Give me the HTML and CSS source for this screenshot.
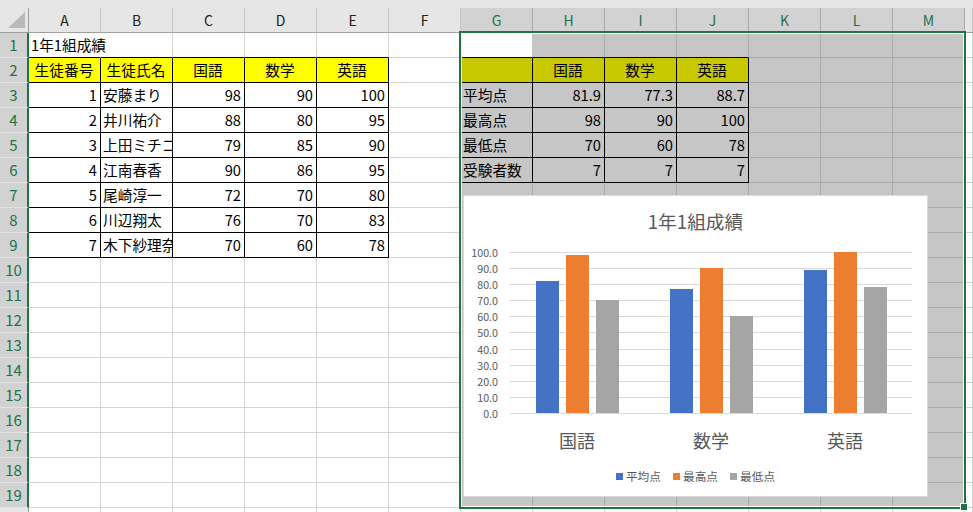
FILE: index.html
```html
<!DOCTYPE html>
<html lang="ja">
<head>
<meta charset="utf-8">
<title>1年1組成績</title>
<link rel="stylesheet" href="styles.css">
</head>
<body>
<div class="app">
  <div class="strip"></div>
  <div class="sheet">
    <div class="corner"><span class="tri"></span></div>
    <div class="ch">A</div><div class="ch">B</div><div class="ch">C</div><div class="ch">D</div><div class="ch">E</div><div class="ch">F</div>
    <div class="ch chs">G</div><div class="ch chs">H</div><div class="ch chs">I</div><div class="ch chs">J</div><div class="ch chs">K</div><div class="ch chs">L</div><div class="ch chs">M</div>
    <div class="ch"></div>

    <div class="rh">1</div>
    <div class="c ov bb">1年1組成績</div><div class="c bb"></div><div class="c bb"></div><div class="c bb"></div><div class="c bb"></div><div class="c"></div>
    <div class="c act bb"></div><div class="c s bb"></div><div class="c s bb"></div><div class="c s bb"></div><div class="c s"></div><div class="c s"></div><div class="c s"></div>
    <div class="c"></div>

    <div class="rh">2</div>
    <div class="c y bk">生徒番号</div><div class="c y bk">生徒氏名</div><div class="c y bk">国語</div><div class="c y bk">数学</div><div class="c y bk">英語</div><div class="c"></div>
    <div class="c s o bk"></div><div class="c s o bk">国語</div><div class="c s o bk">数学</div><div class="c s o bk">英語</div><div class="c s"></div><div class="c s"></div><div class="c s"></div>
    <div class="c"></div>

    <div class="rh">3</div>
    <div class="c r bk">1</div><div class="c bk">安藤まり</div><div class="c r bk">98</div><div class="c r bk">90</div><div class="c r bk">100</div><div class="c"></div>
    <div class="c s bk">平均点</div><div class="c s r bk">81.9</div><div class="c s r bk">77.3</div><div class="c s r bk">88.7</div><div class="c s"></div><div class="c s"></div><div class="c s"></div>
    <div class="c"></div>

    <div class="rh">4</div>
    <div class="c r bk">2</div><div class="c bk">井川祐介</div><div class="c r bk">88</div><div class="c r bk">80</div><div class="c r bk">95</div><div class="c"></div>
    <div class="c s bk">最高点</div><div class="c s r bk">98</div><div class="c s r bk">90</div><div class="c s r bk">100</div><div class="c s"></div><div class="c s"></div><div class="c s"></div>
    <div class="c"></div>

    <div class="rh">5</div>
    <div class="c r bk">3</div><div class="c bk">上田ミチコ</div><div class="c r bk">79</div><div class="c r bk">85</div><div class="c r bk">90</div><div class="c"></div>
    <div class="c s bk">最低点</div><div class="c s r bk">70</div><div class="c s r bk">60</div><div class="c s r bk">78</div><div class="c s"></div><div class="c s"></div><div class="c s"></div>
    <div class="c"></div>

    <div class="rh">6</div>
    <div class="c r bk">4</div><div class="c bk">江南春香</div><div class="c r bk">90</div><div class="c r bk">86</div><div class="c r bk">95</div><div class="c"></div>
    <div class="c s bk">受験者数</div><div class="c s r bk">7</div><div class="c s r bk">7</div><div class="c s r bk">7</div><div class="c s"></div><div class="c s"></div><div class="c s"></div>
    <div class="c"></div>

    <div class="rh">7</div>
    <div class="c r bk">5</div><div class="c bk">尾崎淳一</div><div class="c r bk">72</div><div class="c r bk">70</div><div class="c r bk">80</div><div class="c"></div>
    <div class="c s"></div><div class="c s"></div><div class="c s"></div><div class="c s"></div><div class="c s"></div><div class="c s"></div><div class="c s"></div>
    <div class="c"></div>

    <div class="rh">8</div>
    <div class="c r bk">6</div><div class="c bk">川辺翔太</div><div class="c r bk">76</div><div class="c r bk">70</div><div class="c r bk">83</div><div class="c"></div>
    <div class="c s"></div><div class="c s"></div><div class="c s"></div><div class="c s"></div><div class="c s"></div><div class="c s"></div><div class="c s"></div>
    <div class="c"></div>

    <div class="rh">9</div>
    <div class="c r bk">7</div><div class="c bk">木下紗理奈</div><div class="c r bk">70</div><div class="c r bk">60</div><div class="c r bk">78</div><div class="c"></div>
    <div class="c s"></div><div class="c s"></div><div class="c s"></div><div class="c s"></div><div class="c s"></div><div class="c s"></div><div class="c s"></div>
    <div class="c"></div>

    <div class="rh">10</div>
    <div class="c"></div><div class="c"></div><div class="c"></div><div class="c"></div><div class="c"></div><div class="c"></div>
    <div class="c s"></div><div class="c s"></div><div class="c s"></div><div class="c s"></div><div class="c s"></div><div class="c s"></div><div class="c s"></div>
    <div class="c"></div>

    <div class="rh">11</div>
    <div class="c"></div><div class="c"></div><div class="c"></div><div class="c"></div><div class="c"></div><div class="c"></div>
    <div class="c s"></div><div class="c s"></div><div class="c s"></div><div class="c s"></div><div class="c s"></div><div class="c s"></div><div class="c s"></div>
    <div class="c"></div>

    <div class="rh">12</div>
    <div class="c"></div><div class="c"></div><div class="c"></div><div class="c"></div><div class="c"></div><div class="c"></div>
    <div class="c s"></div><div class="c s"></div><div class="c s"></div><div class="c s"></div><div class="c s"></div><div class="c s"></div><div class="c s"></div>
    <div class="c"></div>

    <div class="rh">13</div>
    <div class="c"></div><div class="c"></div><div class="c"></div><div class="c"></div><div class="c"></div><div class="c"></div>
    <div class="c s"></div><div class="c s"></div><div class="c s"></div><div class="c s"></div><div class="c s"></div><div class="c s"></div><div class="c s"></div>
    <div class="c"></div>

    <div class="rh">14</div>
    <div class="c"></div><div class="c"></div><div class="c"></div><div class="c"></div><div class="c"></div><div class="c"></div>
    <div class="c s"></div><div class="c s"></div><div class="c s"></div><div class="c s"></div><div class="c s"></div><div class="c s"></div><div class="c s"></div>
    <div class="c"></div>

    <div class="rh">15</div>
    <div class="c"></div><div class="c"></div><div class="c"></div><div class="c"></div><div class="c"></div><div class="c"></div>
    <div class="c s"></div><div class="c s"></div><div class="c s"></div><div class="c s"></div><div class="c s"></div><div class="c s"></div><div class="c s"></div>
    <div class="c"></div>

    <div class="rh">16</div>
    <div class="c"></div><div class="c"></div><div class="c"></div><div class="c"></div><div class="c"></div><div class="c"></div>
    <div class="c s"></div><div class="c s"></div><div class="c s"></div><div class="c s"></div><div class="c s"></div><div class="c s"></div><div class="c s"></div>
    <div class="c"></div>

    <div class="rh">17</div>
    <div class="c"></div><div class="c"></div><div class="c"></div><div class="c"></div><div class="c"></div><div class="c"></div>
    <div class="c s"></div><div class="c s"></div><div class="c s"></div><div class="c s"></div><div class="c s"></div><div class="c s"></div><div class="c s"></div>
    <div class="c"></div>

    <div class="rh">18</div>
    <div class="c"></div><div class="c"></div><div class="c"></div><div class="c"></div><div class="c"></div><div class="c"></div>
    <div class="c s"></div><div class="c s"></div><div class="c s"></div><div class="c s"></div><div class="c s"></div><div class="c s"></div><div class="c s"></div>
    <div class="c"></div>

    <div class="rh">19</div>
    <div class="c"></div><div class="c"></div><div class="c"></div><div class="c"></div><div class="c"></div><div class="c"></div>
    <div class="c s"></div><div class="c s"></div><div class="c s"></div><div class="c s"></div><div class="c s"></div><div class="c s"></div><div class="c s"></div>
    <div class="c"></div>

    <div class="rh rh0"></div>
    <div class="c"></div><div class="c"></div><div class="c"></div><div class="c"></div><div class="c"></div><div class="c"></div>
    <div class="c"></div><div class="c"></div><div class="c"></div><div class="c"></div><div class="c"></div><div class="c"></div><div class="c"></div>
    <div class="c"></div>
  </div>

  <div class="sel"></div>
  <div class="handle"></div>

  <div class="chart">
    <div class="ctitle">1年1組成績</div>
    <div class="cplot">
      <div class="yaxis">
        <div class="yl">100.0</div><div class="yl">90.0</div><div class="yl">80.0</div><div class="yl">70.0</div><div class="yl">60.0</div><div class="yl">50.0</div><div class="yl">40.0</div><div class="yl">30.0</div><div class="yl">20.0</div><div class="yl">10.0</div><div class="yl">0.0</div>
      </div>
      <div class="plot">
        <div class="glines">
          <div class="gl"></div><div class="gl"></div><div class="gl"></div><div class="gl"></div><div class="gl"></div><div class="gl"></div><div class="gl"></div><div class="gl"></div><div class="gl"></div><div class="gl"></div><div class="gl"></div>
        </div>
        <div class="bars">
          <div class="cat">
            <div class="bar b1" style="height:131.9px"></div>
            <div class="bar b2" style="height:157.8px"></div>
            <div class="bar b3" style="height:112.7px"></div>
          </div>
          <div class="cat">
            <div class="bar b1" style="height:124.5px"></div>
            <div class="bar b2" style="height:144.9px"></div>
            <div class="bar b3" style="height:96.6px"></div>
          </div>
          <div class="cat">
            <div class="bar b1" style="height:142.8px"></div>
            <div class="bar b2" style="height:161px"></div>
            <div class="bar b3" style="height:125.6px"></div>
          </div>
        </div>
      </div>
    </div>
    <div class="cats">
      <div class="catl">国語</div><div class="catl">数学</div><div class="catl">英語</div>
    </div>
    <div class="legend">
      <div class="li"><span class="sw b1"></span>平均点</div>
      <div class="li"><span class="sw b2"></span>最高点</div>
      <div class="li"><span class="sw b3"></span>最低点</div>
    </div>
  </div>
</div>
</body>
</html>
```

FILE: styles.css
```css
* { box-sizing: border-box; }
body {
  margin: 0;
  background: #fff;
  font-family: "Noto Sans CJK JP", "Noto Sans", sans-serif;
}
.app {
  position: relative;
  width: 973px;
  height: 512px;
  overflow: hidden;
}
.strip {
  height: 8px;
  background: #e6e6e6;
}
.sheet {
  display: grid;
  grid-template-columns: 29px repeat(13, 72px) 1fr;
  grid-auto-rows: 25px;
}
.corner {
  background: #e6e6e6;
  border-right: 1px solid #9f9f9f;
  border-bottom: 1px solid #9f9f9f;
  display: flex;
  align-items: flex-end;
  justify-content: flex-end;
  padding: 0 3px 4px 0;
}
.tri {
  width: 17px;
  height: 16px;
  background: #b9b9b9;
  clip-path: polygon(100% 0, 100% 100%, 0 100%);
}
.ch {
  background: #e6e6e6;
  border-right: 1px solid #c6c6c6;
  border-bottom: 1px solid #9f9f9f;
  text-align: center;
  font-size: 14px;
  line-height: 24px;
  color: #222;
}
.chs {
  background: #d2d2d2;
  color: #217346;
  border-right-color: #ababab;
}
.rh {
  background: #d2d2d2;
  color: #217346;
  border-right: 2px solid #217346;
  border-bottom: 1px solid #e4e4e4;
  text-align: center;
  font-size: 15px;
  line-height: 24px;
}
.rh0 {
  background: #e6e6e6;
  color: #222;
  border-right: 1px solid #9f9f9f;
}
.c {
  border-right: 1px solid #d4d4d4;
  border-bottom: 1px solid #d4d4d4;
  font-size: 14.7px;
  line-height: 24px;
  padding: 0 3px 0 2px;
  white-space: nowrap;
  overflow: hidden;
  color: #000;
}
.ov {
  overflow: visible;
  border-right-color: transparent;
}
.s {
  background: #c6c6c6;
  border-color: #ababab;
}
.act { background: #fff; border-right-color: #c6c6c6; }
.y { background: #ffff00; text-align: center; }
.o { background: #c8c800; text-align: center; }
.r { text-align: right; }
.bb { border-bottom-color: #000; }
.bk { border-color: #000; }

.sel {
  position: absolute;
  left: 459px;
  top: 31px;
  width: 507px;
  height: 478px;
  border: 2px solid #217346;
  box-shadow: inset 0 0 0 1px #fff;
  pointer-events: none;
}
.handle {
  position: absolute;
  left: 960px;
  top: 503px;
  width: 8px;
  height: 8px;
  background: #217346;
  border: 1px solid #fff;
}

.chart {
  position: absolute;
  left: 463px;
  top: 195px;
  width: 465px;
  height: 302px;
  background: #fff;
  border: 1px solid #d9d9d9;
  display: flex;
  flex-direction: column;
  color: #595959;
}
.ctitle {
  padding-top: 13px;
  text-align: center;
  font-size: 18.7px;
  line-height: 24px;
}
.cplot {
  display: flex;
  margin-top: 19px;
}
.yaxis {
  width: 46px;
  height: 162px;
  padding-right: 12px;
  display: flex;
  flex-direction: column;
  justify-content: space-between;
  text-align: right;
}
.yl {
  height: 1px;
  line-height: 1px;
  font-size: 10.7px;
  white-space: nowrap;
}
.plot {
  width: 402px;
  display: grid;
}
.glines, .bars { grid-area: 1 / 1; }
.glines {
  height: 162px;
  display: flex;
  flex-direction: column;
  justify-content: space-between;
}
.gl {
  height: 1px;
  background: #d9d9d9;
}
.bars {
  height: 161px;
  display: flex;
}
.cat {
  flex: 1;
  display: flex;
  justify-content: center;
  align-items: flex-end;
  gap: 7px;
}
.bar { width: 23px; }
.b1 { background: #4472c4; }
.b2 { background: #ed7d31; }
.b3 { background: #a5a5a5; }
.cats {
  display: flex;
  margin-left: 46px;
  width: 402px;
  margin-top: 14px;
}
.catl {
  flex: 1;
  text-align: center;
  font-size: 18px;
  line-height: 24px;
}
.legend {
  display: flex;
  justify-content: center;
  gap: 12px;
  margin-top: 16px;
  font-size: 11.7px;
  line-height: 16px;
}
.li {
  display: flex;
  align-items: center;
  gap: 3px;
}
.sw {
  width: 7px;
  height: 7px;
}
```
